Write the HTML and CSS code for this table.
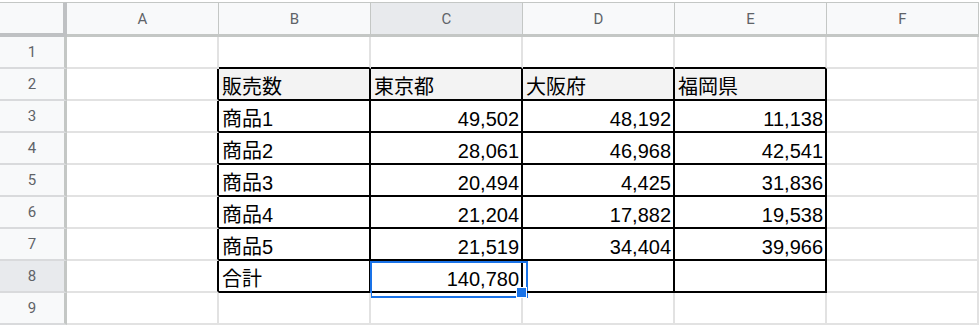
FILE: index.html
```html
<!DOCTYPE html>
<html lang="ja">
<head>
<meta charset="utf-8">
<link rel="stylesheet" href="styles.css">
</head>
<body>
<div class="sheet">
  <div class="corner"></div>
  <div class="ch">A</div><div class="ch">B</div><div class="ch sel">C</div><div class="ch">D</div><div class="ch">E</div><div class="ch">F</div>

  <div class="rh">1</div>
  <div class="c"></div><div class="c tt"></div><div class="c tt"></div><div class="c tt"></div><div class="c tt"></div><div class="c"></div>

  <div class="rh">2</div>
  <div class="c tl"></div><div class="c t hd">販売数</div><div class="c t hd">東京都</div><div class="c t hd">大阪府</div><div class="c t hd">福岡県</div><div class="c"></div>

  <div class="rh">3</div>
  <div class="c tl"></div><div class="c t">商品1</div><div class="c t num">49,502</div><div class="c t num">48,192</div><div class="c t num">11,138</div><div class="c"></div>

  <div class="rh">4</div>
  <div class="c tl"></div><div class="c t">商品2</div><div class="c t num">28,061</div><div class="c t num">46,968</div><div class="c t num">42,541</div><div class="c"></div>

  <div class="rh">5</div>
  <div class="c tl"></div><div class="c t">商品3</div><div class="c t num">20,494</div><div class="c t num">4,425</div><div class="c t num">31,836</div><div class="c"></div>

  <div class="rh">6</div>
  <div class="c tl"></div><div class="c t">商品4</div><div class="c t num">21,204</div><div class="c t num">17,882</div><div class="c t num">19,538</div><div class="c"></div>

  <div class="rh">7</div>
  <div class="c tl"></div><div class="c t">商品5</div><div class="c t num">21,519</div><div class="c t num">34,404</div><div class="c t num">39,966</div><div class="c"></div>

  <div class="rh sel">8</div>
  <div class="c tl"></div><div class="c t">合計</div><div class="c t num active">140,780</div><div class="c t"></div><div class="c t"></div><div class="c"></div>

  <div class="rh">9</div>
  <div class="c"></div><div class="c"></div><div class="c"></div><div class="c"></div><div class="c"></div><div class="c"></div>
</div>
</body>
</html>
```

FILE: styles.css
```css
* { box-sizing: border-box; }
html, body { margin: 0; padding: 0; background: #fff; }
body { padding-top: 2px; overflow: hidden; }

.sheet {
  display: grid;
  grid-template-columns: 67px repeat(6, 152px);
  grid-template-rows: 35px repeat(9, 32px);
}

.corner {
  background: #f8f9fa;
  border-top: 1px solid #c4c7c5;
  border-right: 4px solid #bfc1c3;
  border-bottom: 4px solid #bfc1c3;
}

.ch {
  display: flex;
  align-items: center;
  justify-content: center;
  background: #f8f9fa;
  border-top: 1px solid #c4c7c5;
  border-right: 1px solid #c4c7c5;
  border-bottom: 3px solid #c4c7c5;
  font: 15px Roboto, "Liberation Sans", sans-serif;
  color: #5f6368;
}
.ch.sel { background: #e8eaed; }

.rh {
  display: flex;
  align-items: center;
  justify-content: center;
  background: #f8f9fa;
  border-right: 3px solid #c4c7c5;
  border-bottom: 2px solid #d9dadc;
  font: 15px Roboto, "Liberation Sans", sans-serif;
  color: #5f6368;
}
.rh.sel { background: #e8eaed; }

.c {
  position: relative;
  display: flex;
  align-items: flex-end;
  padding: 0 2px 0 3px;
  border-right: 2px solid #e2e2e2;
  border-bottom: 2px solid #e2e2e2;
  font: 20px "Liberation Sans", "Noto Sans CJK JP", sans-serif;
  line-height: 23px;
  color: #000;
  white-space: nowrap;
  overflow: visible;
}

.tt { border-bottom-color: #000; }
.tl { border-right-color: #000; }
.t { border-right-color: #000; border-bottom-color: #000; }
.hd { background: #f3f3f3; }
.num { justify-content: flex-end; }

.active::after {
  content: "";
  position: absolute;
  left: -1px;
  top: 0;
  width: 154px;
  height: 33px;
  border: 2px solid #1a73e8;
}
.active::before {
  content: "";
  position: absolute;
  right: -6px;
  bottom: -7px;
  width: 9px;
  height: 9px;
  background: #1a73e8;
  border: 1px solid #fff;
  z-index: 2;
}
```
